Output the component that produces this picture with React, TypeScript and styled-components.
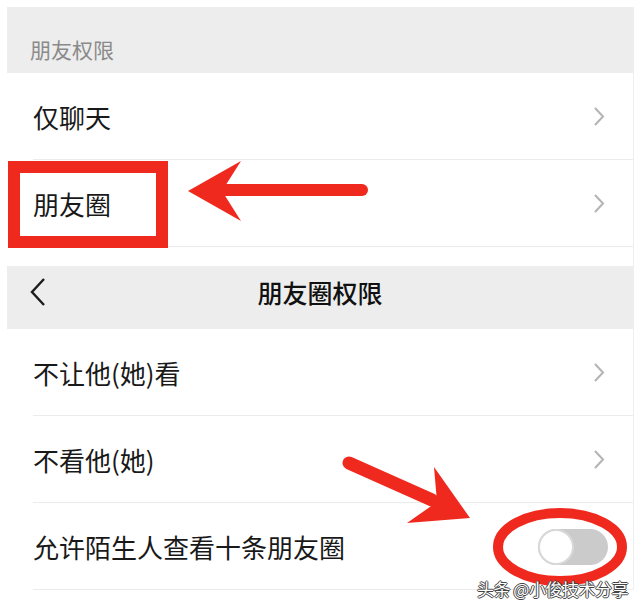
import styled, { createGlobalStyle } from "styled-components";

const GlobalStyle = createGlobalStyle`
    html, body {
        margin: 0;
        padding: 0;
        background: #fff;
    }
    body {
        font-family: "Noto Sans CJK SC", "Noto Sans", sans-serif;
        color: #191919;
    }
`

const RED = "#f0291f";

const Page = styled.div`
    position: relative;
    width: 640px;
    height: 611px;
    overflow: hidden;
    padding: 7px 0 0 7px;
    box-sizing: border-box;
`

const Panel = styled.div`
    width: 626px;
    border-right: 1px solid #efefef;
    display: flex;
    flex-direction: column;
`

const SectionHeader = styled.div`
    height: 66px;
    background: #ededed;
    display: flex;
    align-items: center;
    padding: 18px 0 0 23px;
    box-sizing: border-box;
    font-size: 21px;
    color: #8a8a8a;
`

const Row = styled.div`
    position: relative;
    height: 87px;
    display: flex;
    align-items: center;
    justify-content: space-between;
    padding: 0 28px 0 26px;
    box-sizing: border-box;
    font-size: 26px;
    background: #fff;

    &::after {
        content: "";
        position: absolute;
        left: 26px;
        right: 0;
        bottom: 0;
        height: 1px;
        background: #ececec;
    }
`

const Gap = styled.div`
    height: 19px;
    background: #fff;
`

const NavBar = styled.div`
    position: relative;
    height: 63px;
    padding-bottom: 12px;
    box-sizing: border-box;
    background: #ededed;
    display: flex;
    align-items: center;
    justify-content: center;
    font-size: 25px;
    font-weight: 500;
    color: #111;
`

const BackButton = styled.span`
    position: absolute;
    left: 23px;
    top: 11px;
    display: flex;
`

const Toggle = styled.div<{ $on?: boolean }>`
    width: 70px;
    height: 36px;
    border-radius: 18px;
    background: ${p => (p.$on ? "#07c160" : "#cbcbcb")};
    display: flex;
    align-items: center;
    justify-content: ${p => (p.$on ? "flex-end" : "flex-start")};
    margin-right: -3px;

    &::before {
        content: "";
        width: 32px;
        height: 32px;
        border-radius: 50%;
        background: #fff;
        border: 2px solid #d9d9d9;
    }
`

const MarkBox = styled.div`
    position: absolute;
    left: 8px;
    top: 161px;
    width: 160px;
    height: 87px;
    border: 12px solid ${RED};
    box-sizing: border-box;
`

const Overlay = styled.svg`
    position: absolute;
    left: 0;
    top: 0;
    pointer-events: none;
`

const Watermark = styled.span`
    position: absolute;
    left: 477px;
    top: 576px;
    font-size: 17px;
    color: #fff;
    letter-spacing: -0.5px;
    text-shadow: 1px 0 0 #444, -1px 0 0 #444, 0 1px 0 #444, 0 -1px 0 #444;
`

const Chevron = () => (
    <svg width="12" height="21" viewBox="0 0 12 21">
        <polyline points="2,2 10,10.5 2,19" fill="none" stroke="#b3b3b3" strokeWidth="2" />
    </svg>
)

const BackIcon = () => (
    <svg width="16" height="30" viewBox="0 0 16 30">
        <polyline points="14,2 2,15 14,28" fill="none" stroke="#1c1c1c" strokeWidth="2.4" />
    </svg>
)

const friendItems = ["仅聊天", "朋友圈"];
const momentItems = ["不让他(她)看", "不看他(她)"];

export default function App() {
    return (
        <>
            <GlobalStyle />
            <Page>
                <Panel>
                    <SectionHeader>朋友权限</SectionHeader>
                    {friendItems.map(label => (
                        <Row key={label}>
                            <span>{label}</span>
                            <Chevron />
                        </Row>
                    ))}
                    <Gap />
                    <NavBar>
                        <BackButton><BackIcon /></BackButton>
                        朋友圈权限
                    </NavBar>
                    {momentItems.map(label => (
                        <Row key={label}>
                            <span>{label}</span>
                            <Chevron />
                        </Row>
                    ))}
                    <Row>
                        <span>允许陌生人查看十条朋友圈</span>
                        <Toggle />
                    </Row>
                </Panel>

                <MarkBox />
                <Overlay width="640" height="611" viewBox="0 0 640 611">
                    {/* arrow pointing at 朋友圈 */}
                    <line x1="222" y1="190" x2="362" y2="190" stroke={RED} strokeWidth="12" strokeLinecap="round" />
                    <path d="M188,191 L241,161 L222,191 L241,221 Z" fill={RED} />
                    {/* arrow pointing at the switch */}
                    <line x1="349" y1="463" x2="432" y2="500" stroke={RED} strokeWidth="13" strokeLinecap="round" />
                    <path d="M470,518 L434,467 L437,502 L407,523 Z" fill={RED} />
                    <ellipse cx="560" cy="547" rx="62" ry="34" fill="none" stroke={RED} strokeWidth="10" />
                </Overlay>
                <Watermark>头条 @小俊技术分享</Watermark>
            </Page>
        </>
    )
}
